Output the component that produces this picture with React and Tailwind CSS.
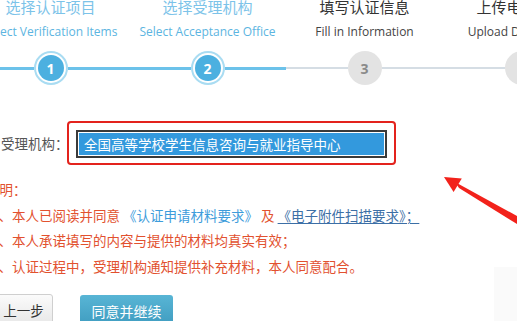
import React from 'react';

const steps = [
  { zh: '选择认证项目', en: 'Select Verification Items', done: true, left: 'blue', right: 'blue' },
  { zh: '选择受理机构', en: 'Select Acceptance Office', done: true, left: 'blue', right: 'blue' },
  { zh: '填写认证信息', en: 'Fill in Information', done: false, left: 'gray', right: 'gray' },
  { zh: '上传电子附件', en: 'Upload Documents', done: false, left: 'gray', right: 'gray' },
];

const Segment = ({ color }) => (
  <div className={color === 'blue' ? 'flex-1 h-[3px] bg-[#6cc2ea]' : 'flex-1 h-[2px] bg-[#d5dde4]'} />
);

const Step = ({ step, index }) => (
  <div className="w-[157px] shrink-0 flex flex-col items-center">
    <div className={`text-[15px] leading-[18px] whitespace-nowrap ${step.done ? 'text-[#7cc3e9]' : 'text-[#333]'}`}>
      {step.zh}
    </div>
    <div
      className={`mt-[8px] text-[12px] leading-[16px] whitespace-nowrap font-['Open_Sans',sans-serif] ${
        step.done ? 'text-[#5cb5e1]' : 'text-[#444]'
      }`}
    >
      {step.en}
    </div>
    <div className="mt-[11px] w-full flex items-center h-[34px]">
      <Segment color={step.left} />
      {step.done ? (
        <div className="w-[34px] h-[34px] rounded-full border-2 border-[#a9dcf2] bg-white p-[2px] shrink-0">
          <div className="w-full h-full rounded-full bg-[#4cb0e0] flex items-center justify-center text-white text-[14px] font-bold font-['Open_Sans',sans-serif]">
            {index + 1}
          </div>
        </div>
      ) : (
        <div className="w-[34px] h-[34px] rounded-full bg-[#e3e3e3] shrink-0 flex items-center justify-center text-[#8a8a8a] text-[14px] font-bold font-['Open_Sans',sans-serif]">
          {index + 1}
        </div>
      )}
      <Segment color={step.right} />
    </div>
  </div>
);

export default function App() {
  return (
    <div className="relative w-[517px] h-[321px] overflow-hidden bg-white font-['Noto_Sans_CJK_SC','Noto_Sans',sans-serif]">
      {/* 步骤条 */}
      <div className="flex ml-[-28px] mt-[-2px]">
        {steps.map((s, i) => (
          <Step key={i} step={s} index={i} />
        ))}
      </div>

      {/* 受理机构 */}
      <div className="flex items-center mt-[36px]">
        <div className="w-[67px] pl-[1px] text-[13.5px] text-[#555] whitespace-nowrap">受理机构：</div>
        <div className="w-[329px] h-[44px] border-2 border-[#e3231d] rounded-[4px] px-[7px] pt-[7px] pb-[5px]">
          <div className="h-full border-2 border-[#3a3a3a] p-[1px] bg-white">
            <div className="h-full bg-[#3399dd] text-white text-[13.5px] leading-[22px] pl-[5px] whitespace-nowrap">
              全国高等学校学生信息咨询与就业指导中心
            </div>
          </div>
        </div>
      </div>

      {/* 说明 */}
      <div className="mt-[12px] text-[13.5px] leading-[25.5px] text-[#e2512f] whitespace-nowrap">
        <div className="ml-[-14px]">说明：</div>
        <div className="ml-[-9px]">
          1、本人已阅读并同意 <span className="text-[#3d9cdb]">《认证申请材料要求》</span> 及{' '}
          <span className="text-[#3c6fa6] underline underline-offset-2">《电子附件扫描要求》；</span>
        </div>
        <div className="ml-[-9px]">2、本人承诺填写的内容与提供的材料均真实有效；</div>
        <div className="ml-[-9px]">3、认证过程中，受理机构通知提供补充材料，本人同意配合。</div>
      </div>

      {/* 按钮 */}
      <div className="flex items-start mt-[15px] gap-[27px]">
        <button className="ml-[-6px] w-[59px] h-[32px] rounded-[3px] border border-[#cfcfcf] bg-gradient-to-b from-[#fbfbfb] to-[#e7e7e7] text-[13.5px] text-[#333]">
          上一步
        </button>
        <button className="w-[93px] h-[32px] mt-[1px] rounded-[3px] bg-gradient-to-b from-[#58b5d5] to-[#3e9bbf] text-[14px] text-white">
          同意并继续
        </button>
      </div>

      {/* 截图标注 */}
      <div className="absolute right-0 top-[267px] w-[23px] h-[54px] bg-[#fafafa]" />
      <svg className="absolute left-0 top-0 pointer-events-none" width="517" height="321" viewBox="0 0 517 321">
        <polygon points="455,182 459,188 517,224 517,216" fill="#f2221b" />
        <polygon points="444,177 461.8,178.5 453.6,192.1" fill="#f2221b" />
      </svg>
    </div>
  );
}
